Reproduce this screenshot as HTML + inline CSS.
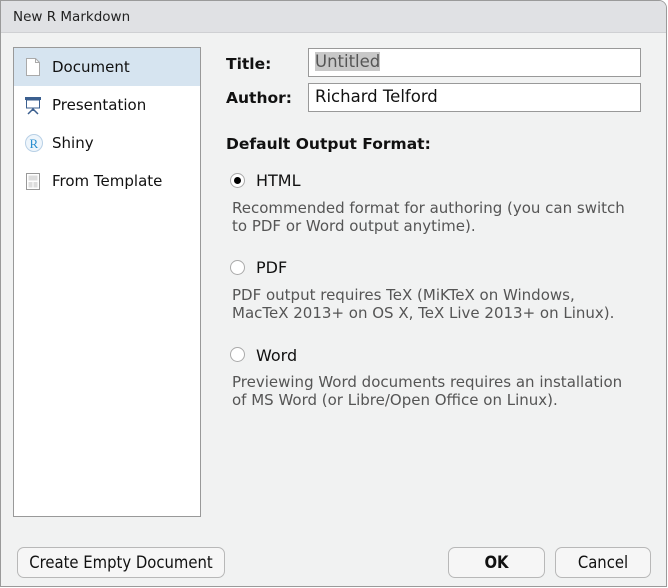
<!DOCTYPE html>
<html><head><style>
*{box-sizing:border-box;margin:0;padding:0}
body{width:668px;height:588px;background:#fff;font-family:"DejaVu Sans","Liberation Sans",sans-serif;font-size:15px;color:#111;position:relative;overflow:hidden}
.dlg{position:absolute;left:0;top:0;width:667px;height:587px;border:1px solid #9a9a9a;border-radius:0 8px 0 0;background:#f1f2f2;overflow:hidden}
.tb{height:32px;background:#e0e1e4;border-bottom:1px solid #cfd0d3;padding:8px 0 0 12px;font-size:13.5px;color:#222}
.side{position:absolute;left:13px;top:47px;width:188px;height:470px;background:#fff;border:1px solid #999}
.row{height:38px;display:flex;align-items:center;padding-left:10px;font-size:15px}
.row.sel{background:#d6e4f0}
.row span{margin-left:10px}
.ab{position:absolute;font-size:15.5px}
.lbl{font-weight:bold}
.inp{position:absolute;left:308px;width:333px;height:29px;background:#fff;border:1px solid #999;padding:3px 0 0 6px;font-size:16.5px}
.radio{position:absolute;left:230px;width:15px;height:15px;border-radius:50%;border:1px solid #aaa;background:#fff}
.desc{position:absolute;left:232px;color:#555;font-size:15px;line-height:18px}
.btn{position:absolute;top:547px;height:31px;border:1px solid #b8b8b8;border-radius:7px;background:#f6f6f6;text-align:center;padding-top:5px;font-family:"DejaVu Sans Condensed","DejaVu Sans",sans-serif;font-size:16.5px}
</style></head><body>
<div class="dlg">
<div class="tb">New R Markdown</div>
</div>
<div class="side">
<div class="row sel"><svg width="18" height="20"><path d="M2.5 1.5h9l4 4v13h-13z" fill="#fff" stroke="#aaa"/><path d="M11.5 1.5v4h4" fill="none" stroke="#aaa"/></svg><span>Document</span></div>
<div class="row"><svg width="18" height="20"><rect x="1" y="2" width="16" height="3" fill="#3b5f8f"/><rect x="2.5" y="5" width="13" height="8" fill="#fff" stroke="#3b5f8f"/><path d="M9 13v3M9 14l-5 5M9 14l5 5" stroke="#3b5f8f" stroke-width="1.5"/></svg><span>Presentation</span></div>
<div class="row"><svg width="20" height="20"><circle cx="10" cy="10" r="8.5" fill="#eef5fb" stroke="#b8d0e6"/><text x="5.5" y="15" font-family="Liberation Serif,serif" font-size="13" fill="#2a8fd0">R</text></svg><span style="margin-left:8px">Shiny</span></div>
<div class="row"><svg width="18" height="20"><rect x="2.5" y="2.5" width="13" height="16" fill="#fff" stroke="#999"/><rect x="4.5" y="4.5" width="9" height="5" fill="#ddd"/><rect x="4.5" y="11" width="4" height="5.5" fill="#ddd"/><rect x="9.5" y="11" width="4" height="5.5" fill="#ddd"/></svg><span>From Template</span></div>
</div>
<div class="ab lbl" style="left:226px;top:55px">Title:</div>
<div class="ab lbl" style="left:226px;top:89px">Author:</div>
<div class="inp" style="top:48px"><span style="background:#c8c8c8;color:#555">Untitled</span></div>
<div class="inp" style="top:83px">Richard Telford</div>
<div class="ab lbl" style="left:226px;top:135px">Default Output Format:</div>
<div class="radio" style="top:173px"><div style="width:7px;height:7px;border-radius:50%;background:#000;margin:3px"></div></div>
<div class="ab" style="left:256px;top:171px;font-size:16px">HTML</div>
<div class="desc" style="top:199px">Recommended format for authoring (you can switch<br>to PDF or Word output anytime).</div>
<div class="radio" style="top:260px"></div>
<div class="ab" style="left:256px;top:258px;font-size:16px">PDF</div>
<div class="desc" style="top:286px">PDF output requires TeX (MiKTeX on Windows,<br>MacTeX 2013+ on OS X, TeX Live 2013+ on Linux).</div>
<div class="radio" style="top:347px"></div>
<div class="ab" style="left:256px;top:346px;font-size:16px">Word</div>
<div class="desc" style="top:373px">Previewing Word documents requires an installation<br>of MS Word (or Libre/Open Office on Linux).</div>
<div class="btn" style="left:17px;width:208px">Create Empty Document</div>
<div class="btn" style="left:448px;width:97px;font-weight:bold">OK</div>
<div class="btn" style="left:555px;width:96px">Cancel</div>
</body></html>
